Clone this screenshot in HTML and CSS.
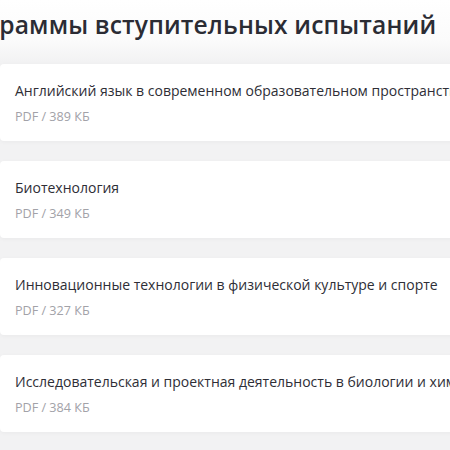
FILE: index.html
```html
<!DOCTYPE html>
<html lang="ru">
<head>
<meta charset="utf-8">
<title>Программы вступительных испытаний</title>
<link rel="stylesheet" href="styles.css">
</head>
<body>
<main class="page">
  <h2 class="section-title">Программы вступительных испытаний</h2>
  <ul class="docs">
    <li class="doc">
      <a class="doc-name" href="#">Английский язык в современном образовательном пространстве</a>
      <span class="doc-meta">PDF / 389 КБ</span>
    </li>
    <li class="doc">
      <a class="doc-name" href="#">Биотехнология</a>
      <span class="doc-meta">PDF / 349 КБ</span>
    </li>
    <li class="doc">
      <a class="doc-name" href="#">Инновационные технологии в физической культуре и спорте</a>
      <span class="doc-meta">PDF / 327 КБ</span>
    </li>
    <li class="doc">
      <a class="doc-name" href="#">Исследовательская и проектная деятельность в биологии и химии</a>
      <span class="doc-meta">PDF / 384 КБ</span>
    </li>
    <li class="doc">
      <a class="doc-name" href="#">Математика</a>
      <span class="doc-meta">PDF / 301 КБ</span>
    </li>
  </ul>
</main>
</body>
</html>
```

FILE: styles.css
```css
html, body {
  margin: 0;
  padding: 0;
}

body {
  background: linear-gradient(#ffffff 0, #fbfbfb 40px, #f2f2f3 62px, #f2f2f3 100%);
  font-family: "Open Sans", "Liberation Sans", sans-serif;
  overflow: hidden;
  height: 450px;
}

.page {
  width: 640px;
  padding-top: 9px;
}

.section-title {
  margin: 0 0 23px -61px;
  font-size: 24.6px;
  line-height: 32px;
  font-weight: 600;
  color: #2b2c34;
  white-space: nowrap;
  letter-spacing: 0.15px;
}

.docs {
  list-style: none;
  margin: 0;
  padding: 0;
  display: flex;
  flex-direction: column;
  gap: 20px;
}

.doc {
  height: 77px;
  box-sizing: border-box;
  padding: 17px 15px 0;
  background: #ffffff;
  border-radius: 4px;
  box-shadow: 0 1px 4px rgba(0, 0, 0, 0.04);
  display: flex;
  flex-direction: column;
  gap: 7px;
}

.doc-name {
  font-size: 14px;
  line-height: 20px;
  font-weight: 500;
  color: #2e2e36;
  text-decoration: none;
  white-space: nowrap;
}

.doc-meta {
  font-size: 12.6px;
  line-height: 18px;
  color: #a2a2a8;
}
```
